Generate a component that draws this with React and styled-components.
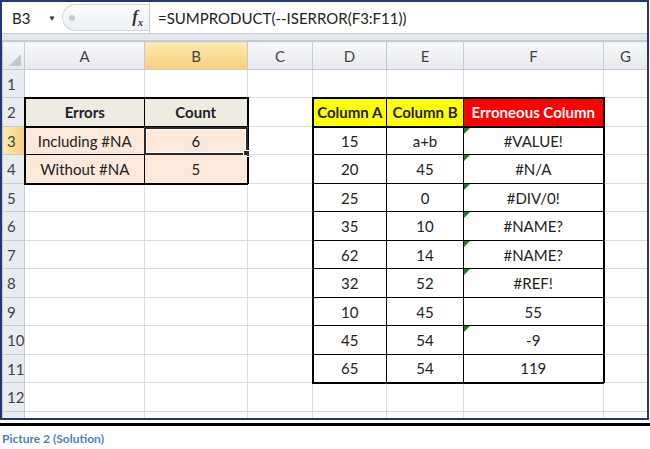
import React from 'react';
import styled, { createGlobalStyle } from 'styled-components';

const GlobalStyle = createGlobalStyle`
  html, body {
    margin: 0;
    padding: 0;
    background: #fff;
  }
  body {
    font-family: Lato, "Open Sans", sans-serif;
  }
`;

const Page = styled.div`
  width: 650px;
  height: 449px;
  display: flex;
  flex-direction: column;
  background: #fff;
  overflow: hidden;
`;

const Frame = styled.div`
  width: 649px;
  height: 420px;
  box-sizing: border-box;
  border: 2px solid #1f3a6e;
  display: flex;
  flex-direction: column;
  overflow: hidden;
  background: #fff;
`;

const FormulaBar = styled.div`
  height: 31px;
  display: flex;
  align-items: stretch;
  background: #fff;
  border-bottom: 1px solid #c6ccd4;
  font-size: 15px;
  color: #222;
`;

const NameBox = styled.div`
  width: 60px;
  display: flex;
  align-items: center;
  justify-content: space-between;
  padding: 0 6px 0 10px;
  box-sizing: border-box;
`;

const Caret = styled.span`
  font-size: 8px;
  color: #333;
`;

const Splitter = styled.div`
  width: 87px;
  margin: 2px 0;
  display: flex;
  align-items: center;
  justify-content: space-between;
  padding: 0 6px 0 6px;
  box-sizing: border-box;
  background: linear-gradient(#fbfcfd, #eef0f3);
  border: 1px solid #cfd4db;
  border-right: none;
  border-radius: 14px 0 0 14px;
`;

const Knob = styled.span`
  width: 6px;
  height: 6px;
  border-radius: 50%;
  background: #c9ced5;
`;

const Fx = styled.span`
  font-family: "Liberation Serif", serif;
  font-style: italic;
  font-weight: 700;
  font-size: 17px;
  color: #333;
  sub {
    font-size: 10px;
  }
`;

const FormulaInput = styled.div`
  flex: 1;
  display: flex;
  align-items: center;
  padding-left: 8px;
  border-left: 1px solid #c6ccd4;
`;

const Strip = styled.div`
  height: 6px;
  background: #e3e7ed;
  border-bottom: 1px solid #c6ccd4;
`;

const SheetArea = styled.div`
  flex: 1;
  overflow: hidden;
`;

const Sheet = styled.table`
  border-collapse: collapse;
  table-layout: fixed;
  width: 645px;
  font-size: 15px;
  color: #222;
`;

const Head = styled.th`
  height: 27px;
  padding: 0;
  font-weight: 400;
  color: #444;
  text-align: center;
  border: 1px solid #c5cad1;
  background: ${p => (p.$active ? 'linear-gradient(#fde9b0, #f7cf7e)' : 'linear-gradient(#f7f8f9, #e6e9ed)')};
`;

const Corner = styled(Head)`
  position: relative;
  &::after {
    content: '';
    position: absolute;
    right: 3px;
    bottom: 3px;
    border-left: 12px solid transparent;
    border-bottom: 12px solid #c3c8cf;
  }
`;

const RowHead = styled.th`
  padding: 0 0 0 4px;
  font-weight: 400;
  color: #444;
  text-align: left;
  border: 1px solid #c5cad1;
  background: ${p => (p.$active ? 'linear-gradient(90deg, #fde9b0, #f7cf7e)' : '#e8ebef')};
`;

const Row = styled.tr`
  height: ${p => p.$h}px;
`;

const Cell = styled.td`
  position: relative;
  padding: 0;
  text-align: center;
  white-space: nowrap;
  overflow: visible;
  background: ${p => p.$bg || '#fff'};
  color: ${p => p.$color || '#222'};
  font-weight: ${p => (p.$bold ? 700 : 400)};
  border-top: ${p => p.$bt || '1px solid #dadcdf'};
  border-bottom: ${p => p.$bb || '1px solid #dadcdf'};
  border-left: ${p => p.$bl || '1px solid #dadcdf'};
  border-right: ${p => p.$br || '1px solid #dadcdf'};

  &::before {
    content: '';
    display: ${p => (p.$flag ? 'block' : 'none')};
    position: absolute;
    top: 0;
    left: 0;
    border-top: 6px solid #1e7b34;
    border-right: 6px solid transparent;
  }
`;

const Selection = styled.span`
  position: absolute;
  inset: -1px;
  border: 2px solid #2b2b2b;
  box-shadow: inset 0 0 0 1px #fff;
  pointer-events: none;

  &::after {
    content: '';
    position: absolute;
    right: -4px;
    bottom: -4px;
    width: 5px;
    height: 5px;
    background: #2b2b2b;
    border: 1px solid #fff;
  }
`;

const Rule = styled.div`
  width: 650px;
  height: 3px;
  margin-top: 3px;
  background: #000;
`;

const Caption = styled.div`
  padding: 5px 0 0 2px;
  font-size: 12px;
  font-weight: 700;
  color: #4f7fbf;
`;

const COLS = ['A', 'B', 'C', 'D', 'E', 'F', 'G'];
const WIDTHS = [22, 120, 103, 65, 74, 77, 140, 44];
const THICK = '2px solid #000';
const THIN = '1px solid #000';

const cells = {};

function addTable(r0, c0, rows) {
  const r1 = r0 + rows.length - 1;
  rows.forEach((row, i) => {
    const r = r0 + i;
    const c1 = c0 + row.length - 1;
    row.forEach((spec, j) => {
      const c = c0 + j;
      cells[`${r}-${c}`] = {
        ...spec,
        bt: r === r0 ? THICK : THIN,
        bb: r === r1 || r === r0 ? THICK : THIN,
        bl: c === c0 ? THICK : THIN,
        br: c === c1 ? THICK : THIN,
      };
    });
  });
}

const tan = '#eeece1';
const peach = '#fde9d9';

addTable(2, 0, [
  [{ v: 'Errors', bold: true, bg: tan }, { v: 'Count', bold: true, bg: tan }],
  [{ v: 'Including #NA', bg: peach }, { v: '6', bg: peach, selected: true }],
  [{ v: 'Without #NA', bg: peach }, { v: '5', bg: peach }],
]);

const data = [
  ['15', 'a+b', '#VALUE!', true],
  ['20', '45', '#N/A', true],
  ['25', '0', '#DIV/0!', true],
  ['35', '10', '#NAME?', true],
  ['62', '14', '#NAME?', true],
  ['32', '52', '#REF!', true],
  ['10', '45', '55', false],
  ['45', '54', '-9', true],
  ['65', '54', '119', false],
];

addTable(2, 3, [
  [
    { v: 'Column A', bold: true, bg: '#ffff00' },
    { v: 'Column B', bold: true, bg: '#ffff00' },
    { v: 'Erroneous Column', bold: true, bg: '#ff0000', color: '#fff' },
  ],
  ...data.map(([a, b, f, flag]) => [{ v: a }, { v: b }, { v: f, flag }]),
]);

// row 13 is only a sliver at the bottom edge, so its number is left out
const ROW_COUNT = 13;

export default function App() {
  return (
    <Page>
      <GlobalStyle />
      <Frame>
        <FormulaBar>
          <NameBox>
            B3
            <Caret>▼</Caret>
          </NameBox>
          <Splitter>
            <Knob />
            <Fx>
              f<sub>x</sub>
            </Fx>
          </Splitter>
          <FormulaInput>=SUMPRODUCT(--ISERROR(F3:F11))</FormulaInput>
        </FormulaBar>
        <Strip />
        <SheetArea>
          <Sheet>
            <colgroup>
              {WIDTHS.map((w, i) => (
                <col key={i} style={{ width: w }} />
              ))}
            </colgroup>
            <thead>
              <tr>
                <Corner />
                {COLS.map(c => (
                  <Head key={c} $active={c === 'B'}>
                    {c}
                  </Head>
                ))}
              </tr>
            </thead>
            <tbody>
              {Array.from({ length: ROW_COUNT }, (_, i) => {
                const r = i + 1;
                return (
                  <Row key={r} $h={r % 2 ? 28 : 29}>
                    <RowHead $active={r === 3}>{r < ROW_COUNT ? r : ''}</RowHead>
                    {COLS.map((_, c) => {
                      const s = cells[`${r}-${c}`] || {};
                      return (
                        <Cell
                          key={c}
                          $bg={s.bg}
                          $color={s.color}
                          $bold={s.bold}
                          $bt={s.bt}
                          $bb={s.bb}
                          $bl={s.bl}
                          $br={s.br}
                          $flag={s.flag}
                        >
                          {s.v}
                          {s.selected && <Selection />}
                        </Cell>
                      );
                    })}
                  </Row>
                );
              })}
            </tbody>
          </Sheet>
        </SheetArea>
      </Frame>
      <Rule />
      <Caption>Picture 2 (Solution)</Caption>
    </Page>
  );
}
